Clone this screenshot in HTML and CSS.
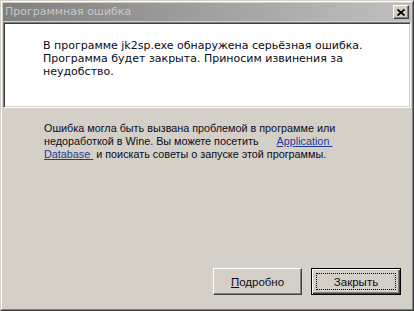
FILE: index.html
```html
<!DOCTYPE html>
<html>
<head>
<meta charset="utf-8">
<link rel="stylesheet" href="styles.css">
</head>
<body>
<div class="window">
  <div class="frame">
    <div class="titlebar">
      <span class="title">Программная ошибка</span>
      <span class="close">
        <svg width="8" height="7" viewBox="0 0 8 7"><path d="M0.5 0.5 L7.5 6.5 M7.5 0.5 L0.5 6.5" stroke="#000" stroke-width="1.8" fill="none"/></svg>
      </span>
    </div>
    <div class="panel">
      <p class="msg">В программе jk2sp.exe обнаружена серьёзная ошибка.<br>Программа будет закрыта. Приносим извинения за<br>неудобство.</p>
    </div>
    <div class="info">
      <p class="note">Ошибка могла быть вызвана проблемой в программе или<br>недоработкой в Wine. Вы можете посетить <a class="link link-first" href="#">Application </a><br><a class="link" href="#">Database </a> и поискать советы о запуске этой программы.</p>
    </div>
    <div class="buttons">
      <button class="btn"><span class="label"><u>П</u>одробно</span></button>
      <button class="btn btn-default"><span class="label focus">Закрыть</span></button>
    </div>
  </div>
</div>
</body>
</html>
```

FILE: styles.css
```css
* { box-sizing: border-box; }
html, body { margin: 0; padding: 0; background: #d4d0c8; }
.window {
  width: 414px;
  height: 311px;
  border: 1px solid;
  border-color: #d4d0c8 #404040 #404040 #d4d0c8;
  background: #d4d0c8;
}
.frame {
  height: 100%;
  border: 1px solid;
  border-color: #fff #808080 #808080 #fff;
  padding: 1px;
  display: flex;
  flex-direction: column;
}
.titlebar {
  height: 18px;
  flex: none;
  background: linear-gradient(to right, #808080, #c0c0c0);
  display: flex;
  align-items: center;
  justify-content: space-between;
  padding: 0 2px 0 2px;
}
.title {
  font-family: "DejaVu Sans", sans-serif;
  font-size: 11px;
  color: #c8c8c8;
  line-height: 18px;
  letter-spacing: 0;
}
.close {
  width: 16px;
  height: 14px;
  background: #d4d0c8;
  border: 1px solid;
  border-color: #fff #404040 #404040 #fff;
  box-shadow: inset -1px -1px #808080;
  display: flex;
  align-items: center;
  justify-content: center;
}
.close svg { display: block; margin-left: -1px; }
.panel {
  flex: none;
  margin-top: 1px;
  height: 86px;
  background: #fff;
  border: 1px solid;
  border-color: #808080 #fff #fff #808080;
  box-shadow: inset 1px 1px #404040, inset -1px -1px #d4d0c8;
  padding: 16px 0 0 39px;
}
.msg {
  margin: 0;
  font-family: "DejaVu Sans", sans-serif;
  font-size: 11px;
  line-height: 13px;
  color: #0a0a20;
}
.info {
  flex: none;
  padding: 14px 0 0 41px;
}
.note {
  margin: 0;
  font-family: "Liberation Sans", sans-serif;
  font-size: 10.8px;
  line-height: 13px;
  color: #0a0a20;
}
.link {
  color: #1c3a9c;
  text-decoration: underline;
  white-space: pre;
}
.link-first { margin-left: 15px; }
.buttons {
  flex: 1;
  display: flex;
  align-items: flex-end;
  justify-content: flex-end;
  gap: 9px;
  padding: 0 10px 13px 0;
}
.btn {
  width: 89px;
  height: 27px;
  margin: 0;
  padding: 0;
  background: #d4d0c8;
  border: 1px solid;
  border-color: #fff #404040 #404040 #fff;
  box-shadow: inset -1px -1px #808080;
  font-family: "Liberation Sans", sans-serif;
  font-size: 11.5px;
  color: #0a0a20;
  display: flex;
  align-items: center;
  justify-content: center;
}
.btn-default {
  width: 90px;
  border-color: #000;
  box-shadow: inset 1px 1px #fff, inset -1px -1px #404040, inset -2px -2px #808080;
  position: relative;
}
.focus::before {
  content: "";
  position: absolute;
  left: 4px; top: 4px; right: 4px; bottom: 4px;
  border: 1px dotted #000;
}
```
